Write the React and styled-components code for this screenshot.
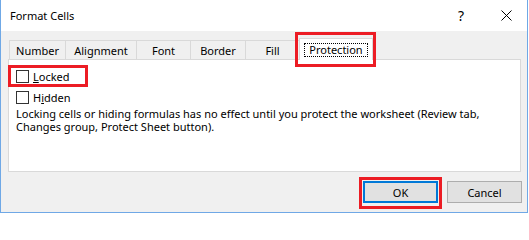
import React from "react";
import styled, { createGlobalStyle } from "styled-components";

const Global = createGlobalStyle`
  html, body { margin: 0; padding: 0; background: #ffffff; }
  body { font-family: "Noto Sans", "Segoe UI", sans-serif; font-size: 11px; color: #000; }
`;

const Window = styled.div`
  width: 526px;
  height: 212px;
  border-left: 1px solid #6fa8e6;
  border-right: 1px solid #6fa8e6;
  border-bottom: 1px solid #6fa8e6;
  display: flex;
  flex-direction: column;
  background: #f0f0f0;
`;

const TitleBar = styled.div`
  height: 31px;
  flex: none;
  background: #ffffff;
  display: flex;
  align-items: center;
  gap: 15px;
  padding-left: 9px;
  padding-right: 6px;
  box-sizing: border-box;
`;

const Title = styled.div`
  flex: 1;
  font-size: 11px;
  line-height: 16px;
`;

const TitleButton = styled.div`
  width: 30px;
  height: 20px;
  display: flex;
  align-items: center;
  justify-content: center;
  font-size: 14px;
  line-height: 1;
`;

const Body = styled.div`
  flex: 1;
  display: flex;
  flex-direction: column;
  padding: 7px 5px 0 7px;
`;

const TabStrip = styled.div`
  height: 21px;
  display: flex;
  align-items: flex-end;
  padding-left: 1px;
`;

const Tab = styled.div`
  position: relative;
  box-sizing: border-box;
  width: ${(p) => p.$w}px;
  height: ${(p) => (p.$active ? 22 : 19)}px;
  margin-left: -1px;
  margin-bottom: ${(p) => (p.$active ? -1 : 0)}px;
  z-index: ${(p) => (p.$active ? 2 : 1)};
  background: ${(p) => (p.$active ? "#ffffff" : "#f0f0f0")};
  border: 1px solid #d9d9d9;
  border-bottom: none;
  display: flex;
  align-items: center;
  justify-content: center;
  padding-top: ${(p) => (p.$active ? 0 : 2)}px;
  font-size: 11px;
  line-height: 14px;
  white-space: nowrap;
  &:first-child { margin-left: 0; }
`;

const FocusLabel = styled.span`
  border: 1px dotted #000;
  padding: 0 4px;
  line-height: 12px;
`;

const Highlight = styled.div`
  position: absolute;
  box-sizing: border-box;
  top: ${(p) => p.$t}px;
  left: ${(p) => p.$l}px;
  bottom: ${(p) => p.$b}px;
  ${(p) => (p.$w ? `width: ${p.$w}px;` : `right: ${p.$r}px;`)}
  border: 3px solid #ec1c24;
  pointer-events: none;
  z-index: 5;
`;

const Panel = styled.div`
  height: 113px;
  box-sizing: border-box;
  margin-right: 1px;
  background: #ffffff;
  border: 1px solid #d9d9d9;
  padding: 10px 7px 0 7px;
  display: flex;
  flex-direction: column;
`;

const CheckRow = styled.label`
  position: relative;
  display: flex;
  align-items: center;
  height: 13px;
  gap: 4px;
  margin-bottom: ${(p) => p.$mb || 0}px;
  line-height: 13px;
`;

const Box = styled.span`
  width: 13px;
  height: 13px;
  box-sizing: border-box;
  border: 1px solid #333333;
  background: #ffffff;
  flex: none;
`;

const Key = styled.span`
  text-decoration: underline;
`;

const Note = styled.p`
  margin: 3px 0 0 0;
  line-height: 13px;
  font-size: 11px;
`;

const ButtonRow = styled.div`
  display: flex;
  justify-content: flex-end;
  gap: 9px;
  margin-top: 9px;
`;

const Button = styled.div`
  position: relative;
  box-sizing: border-box;
  width: 75px;
  height: 22px;
  background: #e1e1e1;
  border: ${(p) => (p.$default ? "2px solid #0078d7" : "1px solid #adadad")};
  display: flex;
  align-items: center;
  justify-content: center;
  font-size: 11px;
`;

const CloseIcon = () => (
  <svg width="11" height="11" viewBox="0 0 11 11">
    <path d="M0.5 0.5 L10.5 10.5 M10.5 0.5 L0.5 10.5" stroke="#000" strokeWidth="1" fill="none" />
  </svg>
);

const tabs = [
  { label: "Number", w: 57 },
  { label: "Alignment", w: 72 },
  { label: "Font", w: 55 },
  { label: "Border", w: 56 },
  { label: "Fill", w: 55 },
];

export default function App() {
  return (
    <>
      <Global />
      <Window>
        <TitleBar>
          <Title>Format Cells</Title>
          <TitleButton>?</TitleButton>
          <TitleButton>
            <CloseIcon />
          </TitleButton>
        </TitleBar>
        <Body>
          <TabStrip>
            {tabs.map((t) => (
              <Tab key={t.label} $w={t.w}>
                {t.label}
              </Tab>
            ))}
            <Tab $w={74} $active>
              <FocusLabel>Protection</FocusLabel>
              <Highlight $t={-7} $l={-5} $r={-4} $b={-7} />
            </Tab>
          </TabStrip>
          <Panel>
            <CheckRow $mb={8}>
              <Box />
              <span>
                <Key>L</Key>ocked
              </span>
              <Highlight $t={-5} $l={-8} $b={-4} $w={80} />
            </CheckRow>
            <CheckRow>
              <Box />
              <span>
                H<Key>i</Key>dden
              </span>
            </CheckRow>
            <Note>
              Locking cells or hiding formulas has no effect until you protect the worksheet (Review tab,
              <br />
              Changes group, Protect Sheet button).
            </Note>
          </Panel>
          <ButtonRow>
            <Button $default>
              OK
              <Highlight $t={-6} $l={-6} $r={-6} $b={-8} />
            </Button>
            <Button>Cancel</Button>
          </ButtonRow>
        </Body>
      </Window>
    </>
  );
}
